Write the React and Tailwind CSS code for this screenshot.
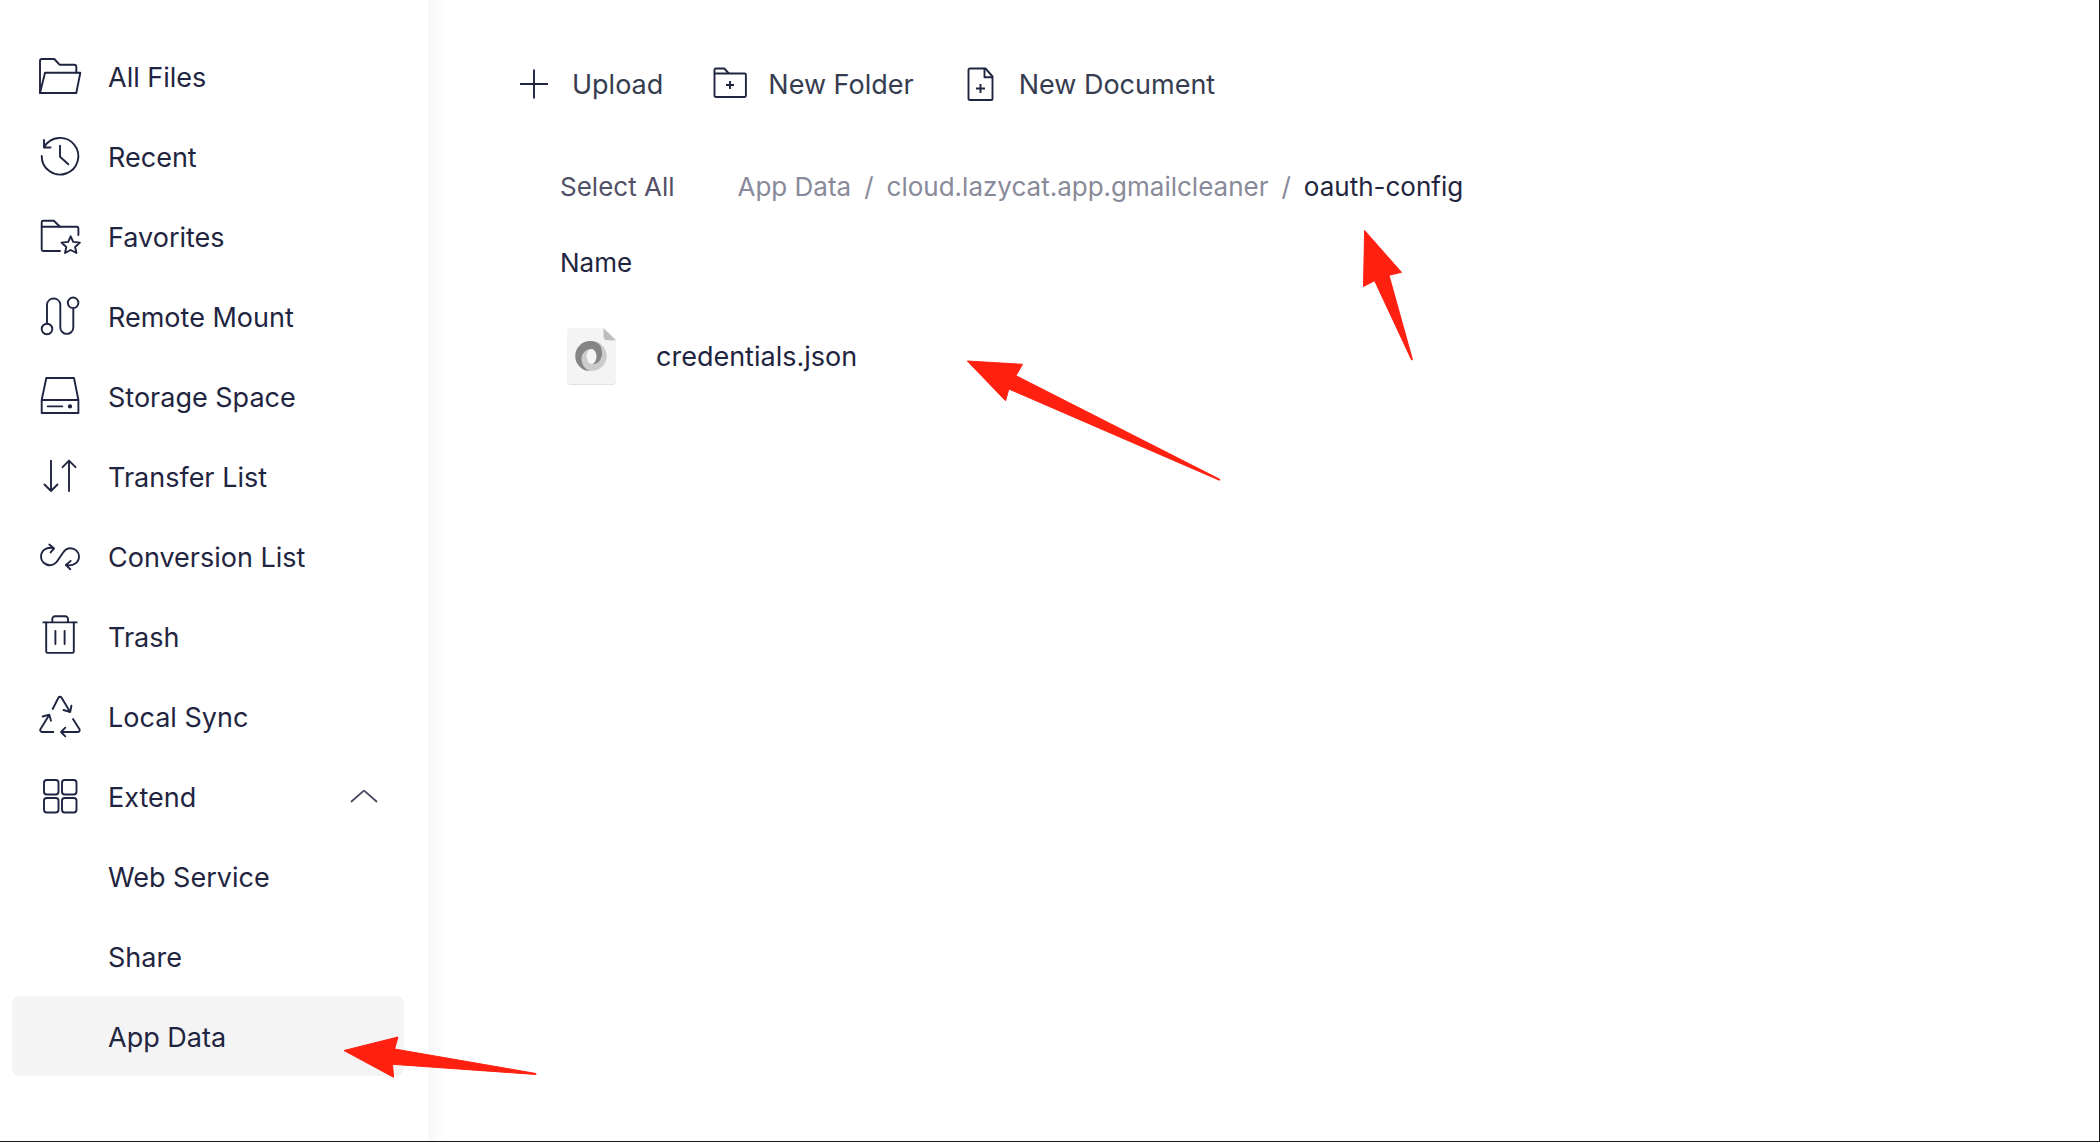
import { clsx } from 'clsx'

const NAV_ICONS = {
  files: (
    <>
      <path d="M4 41V9a2 2 0 0 1 2-2h12.3l5.2 5.7h14.8a2 2 0 0 1 2 2v6" />
      <path d="M9 20.7h35.3L40.3 41H4z" />
    </>
  ),
  recent: (
    <>
      <path d="M5.7 24A18.3 18.3 0 1 0 8.3 14.8" />
      <path d="M8 8v7.5h6.5M24 13.7v11l8.3 7.6" />
    </>
  ),
  favorites: (
    <>
      <path d="M24 39H7.2a1.5 1.5 0 0 1-1.5-1.5V10.3A1.5 1.5 0 0 1 7.2 8.8h10.6l6.2 5.9" />
      <path d="M5.7 14.7h35.2a1.5 1.5 0 0 1 1.5 1.5V23" />
      <path d="M34.7 24.3l2.5 5.6 6.7.7-4.8 4.4 1.3 6-5.7-3-5.7 3 1.3-6-4.8-4.4 6.7-.7z" />
    </>
  ),
  mount: (
    <>
      <circle cx="11" cy="37" r="5.3" />
      <circle cx="37.1" cy="10.8" r="5.3" />
      <path d="M11 31.7V12.4a6.7 6.7 0 0 1 13.3 0v23a6.5 6.5 0 0 0 13 0V16.1" />
    </>
  ),
  storage: (
    <>
      <path d="M10.3 6H38l4.4 22v13H5.7V28zM5.7 28h36.7M11.7 34.4h14.6" />
      <circle cx="34" cy="34.4" r="1.2" fill="currentColor" />
    </>
  ),
  transfer: <path d="M15 8.7V39M8.5 32.5L15 39l6.5-6.5M33 39V8.7M26.6 15.2L33 8.7l6.5 6.5" />,
  conversion: (
    <>
      <path d="M17.5 16.2C10.5 14.5 5 18.5 5 24.7C5 29.6 9 33.2 14 33.2C17.5 33.2 19.7 31.5 21.5 28.8L27 20.7C28.9 17.9 31 16.2 34.3 16.2C39.2 16.2 43 19.8 43 24.6C43 30.5 37.5 34.5 30 33" />
      <path d="M13.3 12.5l4.8 3.9-3.5 4M34.7 28.9L30 33l4.3 4.2" />
    </>
  ),
  trash: (
    <>
      <path d="M7.3 10.4h33.4M16.3 10.4V7a2.7 2.7 0 0 1 2.7-2.7h10.3A2.7 2.7 0 0 1 32 7v3.4" />
      <path d="M10.2 10.4v29.2a1.3 1.3 0 0 0 1.3 1.3h25a1.3 1.3 0 0 0 1.3-1.3V10.4M19.4 19v13M28.6 19v13" />
    </>
  ),
  sync: (
    <>
      <path d="M16.7 17l5.7-11.2a1.8 1.8 0 0 1 3.2 0L34 19.8M27.5 18l6.7 2 1.2-6.3" />
      <path d="M17.3 40H6a1.9 1.9 0 0 1-1.6-2.8l8.9-14.5M6.7 24.5l6.6-1.8 1.7 6" />
      <path d="M37 27l6.5 10.3A1.8 1.8 0 0 1 42 40H25M29.3 35.7L25 40l4.3 4.3" />
    </>
  ),
  extend: (
    <>
      <rect x="8" y="8" width="14.5" height="14.5" rx="2.7" />
      <rect x="26" y="8" width="14.5" height="14.5" rx="2.7" />
      <rect x="8" y="26" width="14.5" height="14.5" rx="2.7" />
      <rect x="26" y="26" width="14.5" height="14.5" rx="2.7" />
    </>
  ),
}

const NAV = [
  { icon: 'files', label: 'All Files' },
  { icon: 'recent', label: 'Recent' },
  { icon: 'favorites', label: 'Favorites' },
  { icon: 'mount', label: 'Remote Mount' },
  { icon: 'storage', label: 'Storage Space' },
  { icon: 'transfer', label: 'Transfer List' },
  { icon: 'conversion', label: 'Conversion List' },
  { icon: 'trash', label: 'Trash' },
  { icon: 'sync', label: 'Local Sync' },
]

const ACTIONS = [
  { label: 'Upload', icon: <path d="M18 3.5v29M4 18h28" /> },
  {
    label: 'New Folder',
    icon: (
      <>
        <path d="M2.5 7.5V3.7a1.2 1.2 0 0 1 1.2-1.2h8.6l4.5 5" />
        <path d="M2.5 7.5h30.2a1.2 1.2 0 0 1 1.2 1.2v21.1a1.2 1.2 0 0 1-1.2 1.2h-29a1.2 1.2 0 0 1-1.2-1.2z" />
        <path d="M18 15v8M14 19h8" />
      </>
    ),
  },
  {
    label: 'New Document',
    icon: (
      <>
        <path d="M22.5 2.5H6.8a1.3 1.3 0 0 0-1.3 1.3v28.9a1.3 1.3 0 0 0 1.3 1.3h21.4a1.3 1.3 0 0 0 1.3-1.3V10.5z" />
        <path d="M21.5 2.5v8.7h8M17.5 18v9M13 22.5h9" />
      </>
    ),
  },
]

function NavIcon({ name }) {
  return (
    <svg viewBox="0 0 48 48" className="size-12 shrink-0" fill="none" stroke="currentColor"
      strokeWidth="1.9" strokeLinecap="round" strokeLinejoin="round" aria-hidden="true">
      {NAV_ICONS[name]}
    </svg>
  )
}

function NavLink({ icon, label, active, children }) {
  return (
    <li className="relative">
      <a href="#" aria-current={active ? 'page' : undefined}
        className={clsx('flex h-20 items-center gap-6 rounded-lg pr-6', icon ? 'pl-6' : 'pl-24', active && 'bg-[#f4f4f4]')}>
        {icon && <NavIcon name={icon} />}
        <span className="pt-1">{label}</span>
      </a>
      {children}
    </li>
  )
}

// Red pointer drawn over the content
function Arrow({ box, d, className }) {
  return (
    <svg viewBox={box} fill="#ff2010" stroke="#ff2010" strokeWidth="1" strokeLinejoin="round"
      className={clsx('pointer-events-none absolute z-10', className)} aria-hidden="true">
      <path d={d} />
    </svg>
  )
}

function JsonFileIcon() {
  return (
    <svg viewBox="0 0 52 60" className="h-15 w-13 shrink-0" aria-hidden="true">
      <path d="M5 3h32l13 12v40a4 4 0 0 1-4 4H5a4 4 0 0 1-4-4V7a4 4 0 0 1 4-4z" fill="#e2e2e2" />
      <path d="M5 2h32l13 12v40a4 4 0 0 1-4 4H5a4 4 0 0 1-4-4V6a4 4 0 0 1 4-4z" fill="#f4f4f4" />
      <path d="M37.5 2L50 14.3h-8.5a4 4 0 0 1-4-4z" fill="#bdbdbd" />
      <circle cx="25.7" cy="30" r="15" fill="#cbcbcb" />
      <path d="M24 45A15 15 0 0 1 24.5 15C32 15 36 20 36 26.5C36 33 33 37.5 27.5 38.2L25.5 23C19 23 15.5 28 15.5 33C15.5 38.5 19 43.5 24 45z" fill="#858585" />
      <ellipse cx="25.5" cy="30.5" rx="5" ry="7.6" fill="#f4f4f4" />
    </svg>
  )
}

function Sidebar() {
  return (
    <nav className="w-107 shrink-0 pt-9 pr-6 pl-3" aria-label="Files">
      <ul>
        {NAV.map(item => <NavLink key={item.label} {...item} />)}
        <li>
          <button type="button" aria-expanded="true" className="flex h-20 w-full items-center gap-6 px-6 text-left">
            <NavIcon name="extend" />
            <span className="flex-1 pt-1">Extend</span>
            <svg viewBox="0 0 32 16" className="h-4 w-8 text-[#4b4862]" fill="none" stroke="currentColor"
              strokeWidth="1.8" strokeLinecap="round" strokeLinejoin="round" aria-hidden="true">
              <path d="M3.5 13.5L15 3.3q1-.8 2 0l11.5 10.2" />
            </svg>
          </button>
          <ul>
            <NavLink label="Web Service" />
            <NavLink label="Share" />
            <NavLink label="App Data" active>
              <Arrow box="340 1034 200 46" className="top-[38px] left-[328px] h-[46px] w-[200px]"
                d="M344 1050.5L398 1037L394.6 1049L536 1073.5V1074.5L392.5 1064.3L393.6 1077.3z" />
            </NavLink>
          </ul>
        </li>
      </ul>
    </nav>
  )
}

export default function App() {
  return (
    <div className="flex min-h-screen border-r border-b border-[#17171a] bg-white text-[27px] leading-8 text-[#1f2540]"
      style={{ fontFamily: "Inter, 'Liberation Sans', sans-serif" }}>
      <Sidebar />

      <main className="min-w-0 flex-1 bg-linear-to-r from-[#f7f7f7] to-white to-[16px] pt-15 pl-22">
        <div className="flex h-12 items-center gap-[49px] text-[#363c50]">
          {ACTIONS.map(({ label, icon }) => (
            <button key={label} type="button" className="flex items-center gap-5">
              <svg viewBox="0 0 36 36" className="size-9 text-[#1f2540]" fill="none" stroke="currentColor"
                strokeWidth="1.9" strokeLinejoin="round" aria-hidden="true">
                {icon}
              </svg>
              <span className="pt-0.5">{label}</span>
            </button>
          ))}
        </div>

        <div className="mt-[63px] flex items-center gap-[63px] pl-11 text-[26px]">
          <button type="button" className="text-[#525069]">Select All</button>
          <nav aria-label="Breadcrumb">
            <ol className="flex items-center gap-[13px] text-[#888a9a]">
              <li><a href="#">App Data</a></li>
              <li aria-hidden="true">/</li>
              <li><a href="#">cloud.lazycat.app.gmailcleaner</a></li>
              <li aria-hidden="true">/</li>
              <li className="relative text-[#1f2540]" aria-current="page">
                oauth-config
                <Arrow box="1360 226 56 138" className="top-[55px] left-14 h-[138px] w-14"
                  d="M1364.6 230.5L1401.5 272.3L1389 275.3L1412.5 359.8H1411.5L1374.6 280.7L1363.5 286.5z" />
              </li>
            </ol>
          </nav>
        </div>

        <table className="mt-11 ml-11 text-left">
          <thead>
            <tr><th className="text-[26px] font-normal">Name</th></tr>
          </thead>
          <tbody>
            <tr>
              <td className="relative pt-[47px]">
                <a href="#" className="flex items-center gap-[38px] pl-1.5">
                  <JsonFileIcon />
                  <span className="pt-0.5">credentials.json</span>
                </a>
                <Arrow box="963 356 262 129" className="top-[77px] left-[403px] h-[129px] w-[262px]"
                  d="M967.3 361L1022.5 364.3L1016 375.7L1219.8 479.3L1219.5 480.3L1008.8 389L1005.6 400.8z" />
              </td>
            </tr>
          </tbody>
        </table>
      </main>
    </div>
  )
}
